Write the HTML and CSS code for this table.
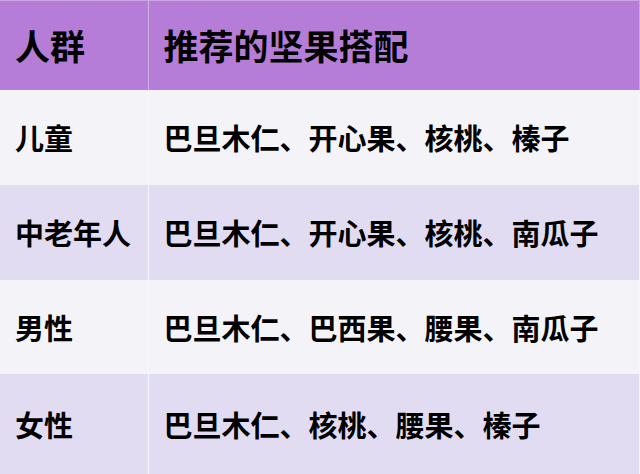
FILE: index.html
```html
<!DOCTYPE html>
<html lang="zh">
<head>
<meta charset="utf-8">
<link rel="stylesheet" href="styles.css">
</head>
<body>
<table class="nuts">
  <thead>
    <tr class="head"><th class="c1">人群</th><th class="c2">推荐的坚果搭配</th></tr>
  </thead>
  <tbody>
    <tr class="light r1"><td class="c1">儿童</td><td class="c2">巴旦木仁、开心果、核桃、榛子</td></tr>
    <tr class="tint r2"><td class="c1">中老年人</td><td class="c2">巴旦木仁、开心果、核桃、南瓜子</td></tr>
    <tr class="light r3"><td class="c1">男性</td><td class="c2">巴旦木仁、巴西果、腰果、南瓜子</td></tr>
    <tr class="tint r4"><td class="c1">女性</td><td class="c2">巴旦木仁、核桃、腰果、榛子</td></tr>
  </tbody>
</table>
</body>
</html>
```
FILE: styles.css
```css
html, body {
  margin: 0;
  padding: 0;
  width: 640px;
  height: 474px;
  overflow: hidden;
  background: #e2dcf3;
}
.nuts {
  width: 640px;
  border-collapse: collapse;
  table-layout: fixed;
  font-family: "Noto Sans CJK SC", "Noto Sans", sans-serif;
  font-weight: 700;
  color: #000;
}
.nuts th, .nuts td {
  padding: 0 0 0 15px;
  text-align: left;
  vertical-align: middle;
  white-space: nowrap;
  box-sizing: border-box;
}
.nuts .c1 {
  width: 148px;
  border-right: 1px solid #f7f6fa;
}
.nuts .c2 {
  padding-left: 15px;
  border-right: 1px solid #f7f6fa;
}
.head {
  background: #b57dd8;
  height: 89px;
}
.head th {
  font-size: 35px;
  font-weight: 700;
  border-top: 1px solid #c9a3e3;
  padding-bottom: 2px;
}
.head .c1 {
  border-right: 1px solid #d2b2e9;
}
.head .c2 {
  border-right: 1px solid #c9a3e3;
}
.nuts td {
  font-size: 29px;
}
.light { background: #f4f3f7; }
.tint { background: #e2dcf3; }
.r1, .r2 { height: 95px; }
.r3 { height: 94px; }
.r4 { height: 101px; }
```
